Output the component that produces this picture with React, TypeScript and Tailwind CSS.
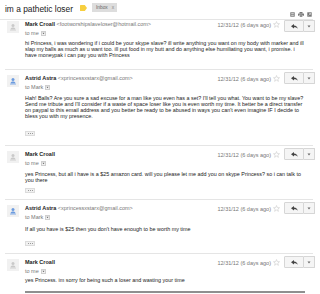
import React from "react";

const FONT = "font-['Liberation_Sans',Arial,sans-serif]";

function Avatar({ blue, className }: { blue?: boolean; className: string }) {
  const c = blue ? "#6b9be0" : "#c9c9c9";
  return (
    <div className={`w-[12px] h-[12px] shrink-0 bg-[#f1f1f1] flex items-center justify-center ${className}`}>
      <svg width="8" height="8" viewBox="0 0 8 8">
        <circle cx="4" cy="2.6" r="1.5" fill={c} />
        <path d="M1.6 6.4 C1.6 4.9 2.6 4.4 4 4.4 C5.4 4.4 6.4 4.9 6.4 6.4 Z" fill={c} />
        <rect x="1" y="6.8" width="6" height="0.6" fill={c} />
      </svg>
    </div>
  );
}

function Tri() {
  return (
    <svg width="4" height="3" viewBox="0 0 4 3">
      <path d="M0.5 0.5 L3.5 0.5 L2 2.5 Z" fill="#666" />
    </svg>
  );
}

function Star({ className }: { className: string }) {
  return (
    <svg className={className} width="7" height="7" viewBox="0 0 10 10">
      <path
        d="M5 0.8 L6.2 3.7 L9.3 3.9 L6.9 5.9 L7.7 9 L5 7.3 L2.3 9 L3.1 5.9 L0.7 3.9 L3.8 3.7 Z"
        fill="none"
        stroke="#c8c8c8"
        strokeWidth="0.8"
      />
    </svg>
  );
}

function Buttons() {
  return (
    <div className="ml-[4px] flex h-[12px]">
      <div className="w-[20px] h-[12px] border border-[#d6d6d6] bg-[#f5f5f5] rounded-l-[1px] flex items-center justify-center">
        <svg width="7" height="5" viewBox="0 0 7 5">
          <path d="M3 0 L0 2.3 L3 4.6 L3 3.2 C4.6 3.2 5.8 3.6 6.8 4.8 C6.4 2.6 5.2 1.5 3 1.4 Z" fill="#444" />
        </svg>
      </div>
      <div className="w-[11px] h-[12px] border border-l-0 border-[#d6d6d6] bg-[#f5f5f5] rounded-r-[1px] flex items-center justify-center">
        <Tri />
      </div>
    </div>
  );
}

type MsgProps = {
  first?: boolean;
  blue?: boolean;
  name: string;
  email?: string;
  to: string;
  lines: string[];
  bodyMt: string;
  dots?: boolean;
  dotsMt?: string;
  pb: string;
};

function Message({ first, blue, name, email, to, lines, bodyMt, dots, dotsMt, pb }: MsgProps) {
  return (
    <div className={`flex pl-[7px] pr-[5px] ${first ? "pt-0" : "pt-[2px]"} ${pb}`}>
      <Avatar blue={blue} className={first ? "mt-[1px]" : "mt-[3px]"} />
      <div className="ml-[6px] flex-1 min-w-0">
        <div className="flex">
          <div className="flex-1 min-w-0">
            <div className={`${first ? "mt-[1px]" : "mt-[3px]"} h-[6px] leading-[6px] text-[5.5px] whitespace-nowrap`}>
              <span className="font-bold text-[#222]">{name}</span>
              {email && <span className="text-[#777]"> {email}</span>}
            </div>
            <div className="mt-[3px] h-[6px] flex items-center text-[5.5px] leading-[6px] text-[#777]">
              <span>{to}</span>
              <span className="ml-[2px] w-[5px] h-[5px] border border-[#cfcfcf] bg-[#f4f4f4] flex items-center justify-center">
                <Tri />
              </span>
            </div>
          </div>
          <div className="flex items-start">
            <span className={`${first ? "mt-[2px]" : "mt-[4px]"} text-[5.5px] leading-[6px] text-[#777] whitespace-nowrap`}>
              12/31/12 (6 days ago)
            </span>
            <Star className={`${first ? "mt-[1px]" : "mt-[3px]"} ml-[2px]`} />
            <Buttons />
          </div>
        </div>
        <div className={`${bodyMt} text-[5.4px] leading-[6px] text-[#222]`}>
          {lines.map((l, i) => (
            <div key={i} className="whitespace-nowrap h-[6px]">
              {l}
            </div>
          ))}
        </div>
        {dots && (
          <div className={`${dotsMt} w-[10px] h-[5px] border border-[#dcdcdc] bg-[#f1f1f1] flex items-center justify-center gap-[1px]`}>
            <span className="w-[1px] h-[1px] bg-[#999]" />
            <span className="w-[1px] h-[1px] bg-[#999]" />
            <span className="w-[1px] h-[1px] bg-[#999]" />
          </div>
        )}
      </div>
    </div>
  );
}

function Sep() {
  return <div className="ml-[5px] w-[308px] h-px bg-[#e5e5e5]" />;
}

export default function App() {
  return (
    <div className={`w-[320px] h-[294px] overflow-hidden bg-white ${FONT}`}>
      <div className="h-[19px] flex items-start pl-[5px] pr-[8px]">
        <div className="mt-[4px] text-[8.4px] leading-[10px] text-[#222] whitespace-nowrap">im a pathetic loser</div>
        <svg className="ml-[7px] mt-[5px]" width="7" height="6" viewBox="0 0 7 6">
          <path d="M0 0.5 Q0 0 0.5 0 L4.8 0 L7 3 L4.8 6 L0.5 6 Q0 6 0 5.5 Z" fill="#f7cf3f" />
        </svg>
        <div className="ml-[5px] mt-[3px] h-[9px] w-[25px] bg-[#dddddd] flex items-center pl-[4px] text-[4.8px] text-[#666]">
          <span>Inbox</span>
          <span className="ml-[4px] text-[#888]">x</span>
        </div>
        <div className="ml-auto mt-[12px] flex gap-[3px]">
          <svg width="5" height="5" viewBox="0 0 5 5">
            <rect x="0.3" y="0.3" width="4.4" height="4.4" fill="#777" />
            <rect x="1.2" y="1.2" width="2.6" height="1" fill="#ddd" />
            <rect x="1.2" y="2.8" width="2.6" height="1" fill="#ddd" />
          </svg>
          <svg width="6" height="5" viewBox="0 0 6 5">
            <rect x="1.5" y="0" width="3" height="1.5" fill="#777" />
            <rect x="0" y="1.5" width="6" height="2.2" rx="0.5" fill="#777" />
            <rect x="1.5" y="3" width="3" height="2" fill="#777" stroke="#fff" strokeWidth="0.4" />
          </svg>
          <svg width="5" height="5" viewBox="0 0 5 5">
            <rect x="0.3" y="0.3" width="4.4" height="4.4" fill="#777" />
            <path d="M1.5 3.5 L3.5 1.5 M2.2 1.5 L3.5 1.5 L3.5 2.8" stroke="#eee" strokeWidth="0.6" fill="none" />
          </svg>
        </div>
      </div>
      <div className="w-[313px] h-px bg-[#e5e5e5]" />
      <Message
        first
        name="Mark Croall"
        email="<footworshipslaveloser@hotmail.com>"
        to="to me"
        lines={[
          "hi Princess, i was wondering if i could be your skype slave? ill write anything you want on my body with marker and ill",
          "slap my balls as much as u want too. ill put food in my butt and do anything else humiliating you want, i promise. i",
          "have moneypak i can pay you with Princess",
        ]}
        bodyMt="mt-[4px]"
        pb="pb-[11px]"
      />
      <Sep />
      <Message
        blue
        name="Astrid Astra"
        email="<xprincessxstarx@gmail.com>"
        to="to Mark"
        lines={[
          "Hah! Balls? Are you sure a sad excuse for a man like you even has a set? I'll tell you what. You want to be my slave?",
          "Send me tribute and I'll consider if a waste of space loser like you is even worth my time. It better be a direct transfer",
          "on paypal to this email address and you better be ready to be abused in ways you can't even imagine IF I decide to",
          "bless you with my presence.",
        ]}
        bodyMt="mt-[5px]"
        dots
        dotsMt="mt-[12px]"
        pb="pb-[9px]"
      />
      <Sep />
      <Message
        name="Mark Croall"
        to="to me"
        lines={[
          "yes Princess, but all i have is a $25 amazon card. will you please let me add you on skype Princess? so i can talk to",
          "you there",
        ]}
        bodyMt="mt-[5px]"
        dots
        dotsMt="mt-[5px]"
        pb="pb-[6px]"
      />
      <Sep />
      <Message
        blue
        name="Astrid Astra"
        email="<xprincessxstarx@gmail.com>"
        to="to Mark"
        lines={["If all you have is $25 then you don't have enough to be worth my time"]}
        bodyMt="mt-[6px]"
        dots
        dotsMt="mt-[9px]"
        pb="pb-[7px]"
      />
      <Sep />
      <Message
        name="Mark Croall"
        to="to me"
        lines={["yes Princess. im sorry for being such a loser and wasting your time"]}
        bodyMt="mt-[3px]"
        pb="pb-[8px]"
      />
      <div className="ml-[25px] w-[280px] h-[2px] bg-[#8f8f8f]" />
    </div>
  );
}
